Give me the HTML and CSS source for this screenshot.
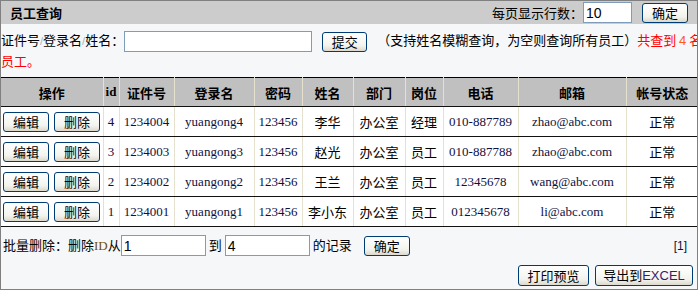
FILE: index.html
```html
<!DOCTYPE html>
<html lang="zh-CN">
<head>
<meta charset="UTF-8" />
<title>员工查询</title>
<link rel="stylesheet" href="styles.css">
</head>
<body>

<div class="panel">
  <div class="panel-head">
    <h2>员工查询</h2>
    <div class="page-size">
      每页显示行数：<input class="txt size-input" type="text" value="10">
      <button class="btn">确定</button>
    </div>
  </div>

  <div class="search">
    证件号<span class="slash">/</span>登录名<span class="slash">/</span>姓名：<input class="txt key-input" type="text"><button class="btn submit">提交</button><span class="hint">（支持姓名模糊查询，为空则查询所有员工）</span><span class="total">共查到 <span class="num">4</span> 名<br>员工。</span>
  </div>

  <table class="grid">
    <colgroup>
      <col style="width:102px"><col style="width:16px"><col style="width:55px">
      <col style="width:80px"><col style="width:48px"><col style="width:51px">
      <col style="width:52px"><col style="width:38px"><col style="width:75px">
      <col style="width:108px"><col style="width:72px">
    </colgroup>
    <thead>
      <tr>
        <th>操作</th><th class="en">id</th><th>证件号</th><th>登录名</th><th>密码</th>
        <th>姓名</th><th>部门</th><th>岗位</th><th>电话</th><th>邮箱</th><th>帐号状态</th>
      </tr>
    </thead>
    <tbody>
      <tr>
        <td class="ops"><button class="btn">编辑</button><button class="btn">删除</button></td>
        <td class="en">4</td><td class="en">1234004</td><td class="en">yuangong4</td><td class="en">123456</td>
        <td>李华</td><td>办公室</td><td>经理</td><td class="en">010-887789</td><td class="en">zhao@abc.com</td><td>正常</td>
      </tr>
      <tr>
        <td class="ops"><button class="btn">编辑</button><button class="btn">删除</button></td>
        <td class="en">3</td><td class="en">1234003</td><td class="en">yuangong3</td><td class="en">123456</td>
        <td>赵光</td><td>办公室</td><td>员工</td><td class="en">010-887788</td><td class="en">zhao@abc.com</td><td>正常</td>
      </tr>
      <tr>
        <td class="ops"><button class="btn">编辑</button><button class="btn">删除</button></td>
        <td class="en">2</td><td class="en">1234002</td><td class="en">yuangong2</td><td class="en">123456</td>
        <td>王兰</td><td>办公室</td><td>员工</td><td class="en">12345678</td><td class="en">wang@abc.com</td><td>正常</td>
      </tr>
      <tr>
        <td class="ops"><button class="btn">编辑</button><button class="btn">删除</button></td>
        <td class="en">1</td><td class="en">1234001</td><td class="en">yuangong1</td><td class="en">123456</td>
        <td>李小东</td><td>办公室</td><td>员工</td><td class="en">012345678</td><td class="en">li@abc.com</td><td>正常</td>
      </tr>
    </tbody>
  </table>

  <div class="batch">
    <div class="batch-form">批量删除：删除<span class="en">ID</span>从<input class="txt range-input" type="text" value="1"><span class="to">到</span><input class="txt range-input" type="text" value="4"><span class="to">的记录</span><button class="btn ok">确定</button></div>
    <span class="pager">[1]</span>
  </div>

  <div class="actions">
    <button class="btn print">打印预览</button>
    <button class="btn export">导出到<span class="latin">EXCEL</span></button>
  </div>
</div>

</body>
</html>
```

FILE: styles.css
```css
body {
  margin: 0;
  font-family: "Noto Sans CJK SC", "Liberation Sans", sans-serif;
  font-size: 13px;
  color: #000;
}
.panel {
  width: 696px;
  height: 288px;
  border: 1px solid #808080;
  background: #f6f7f9;
  overflow: hidden;
}
.panel-head {
  height: 23px;
  background: #cccccc;
  display: flex;
  align-items: center;
  justify-content: space-between;
  padding: 0 9px 0 9px;
}
.panel-head h2 {
  margin: 0;
  font-size: 13px;
  font-weight: bold;
}
.page-size {
  display: flex;
  align-items: center;
}
.txt {
  box-sizing: border-box;
  height: 21px;
  border: 1px solid #7f9db9;
  background: #fff;
  font-family: "Liberation Sans", sans-serif;
  font-size: 14px;
  padding: 0 2px;
  margin: 0;
  vertical-align: middle;
}
.size-input {
  width: 49px;
  margin: 0 10px 0 0;
}
.btn {
  box-sizing: border-box;
  height: 20px;
  padding: 0 6px;
  margin: 0;
  border: 1px solid #003c74;
  border-radius: 3px;
  background: linear-gradient(#ffffff, #f3f3ee 70%, #dcd8cc);
  font-family: "Noto Sans CJK SC", sans-serif;
  font-size: 13px;
  line-height: 18px;
  color: #000;
  vertical-align: middle;
  white-space: nowrap;
}
.page-size .btn {
  width: 46px;
}

.search {
  box-sizing: border-box;
  height: 53px;
  padding: 7px 0 0 0;
  line-height: 17px;
  white-space: nowrap;
}
.slash {
  color: #a8b0c0;
  font-family: "Liberation Sans", sans-serif;
  font-size: 11px;
}
.key-input {
  width: 188px;
  margin-left: 0;
}
.submit {
  width: 45px;
  margin-left: 10px;
  margin-right: 10px;
}
.total {
  color: #ff0000;
}
.total .num {
  font-family: "Liberation Sans", sans-serif;
  color: #ff5a1a;
}

.grid {
  width: 697px;
  border-collapse: collapse;
  table-layout: fixed;
  border-top: 1px solid #000;
}
.grid th,
.grid td {
  border-left: 1px solid #e6e1cc;
  border-bottom: 1px solid #111;
  text-align: center;
  padding: 0;
  white-space: nowrap;
  overflow: hidden;
}
.grid th:first-child,
.grid td:first-child {
  border-left: none;
}
.grid th {
  height: 28px;
  background: #c0c0c0;
  font-weight: bold;
}
.grid td {
  height: 29px;
  background: #fff;
}
.en {
  font-family: "Liberation Serif", serif;
  font-size: 13px;
  color: #101040;
}
.grid th.en {
  color: #000;
}
.grid td.ops {
  text-align: left;
  padding-left: 2px;
}
.ops .btn {
  width: 46px;
  margin-right: 5px;
}

.batch {
  display: flex;
  align-items: center;
  justify-content: space-between;
  height: 21px;
  margin-top: 8px;
  padding: 0 10px 0 2px;
}
.batch .en {
  color: #705000;
}
.range-input {
  width: 85px;
}
.to {
  margin: 0 3px;
}
.ok {
  width: 46px;
  margin-left: 9px;
}
.pager {
  font-family: "Liberation Sans", sans-serif;
  font-size: 12px;
  color: #101040;
}

.actions {
  display: flex;
  justify-content: flex-end;
  gap: 6px;
  margin-top: 9px;
  padding-right: 4px;
}
.actions .btn {
  height: 21px;
}
.print {
  width: 71px;
}
.export {
  width: 98px;
}
.latin {
  font-family: "Liberation Sans", sans-serif;
  color: #3a1a6a;
}
```
